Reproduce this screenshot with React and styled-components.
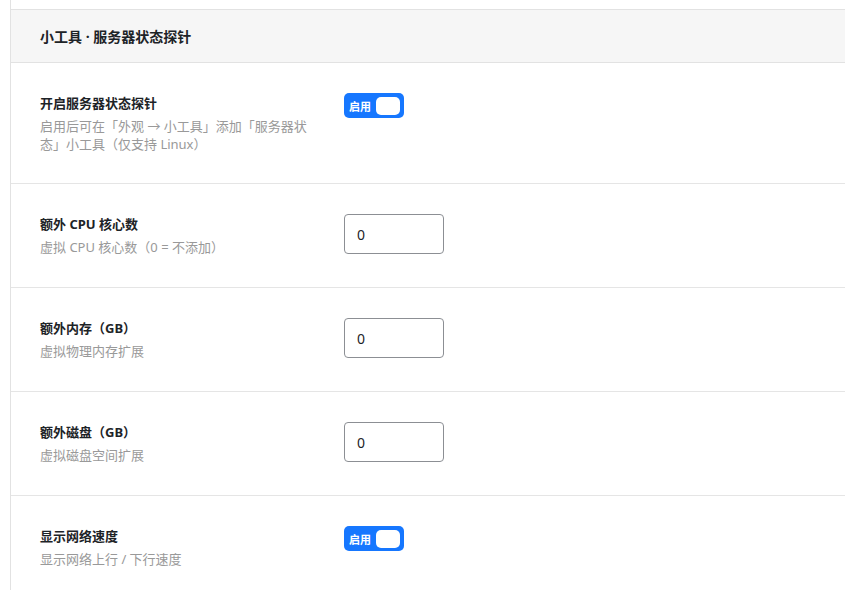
import React from 'react';
import styled, { createGlobalStyle } from 'styled-components';

const GlobalStyle = createGlobalStyle`
  body {
    margin: 0;
    background: #fff;
    font-family: "Noto Sans", "Noto Sans CJK SC", sans-serif;
    color: #1d2327;
  }
`;

const Wrap = styled.div`
  margin-left: 10px;
  padding-top: 9px;
  border-left: 1px solid #e2e2e2;
  min-height: 590px;
  box-sizing: border-box;
`;

const Section = styled.section`
  border-top: 1px solid #e2e2e2;
`;

const Header = styled.div`
  height: 52px;
  display: flex;
  align-items: center;
  padding: 0 29px;
  background: #f6f6f6;
  border-bottom: 1px solid #e2e2e2;
  font-size: 14px;
  font-weight: 700;
  color: #1d2327;
`;

const Row = styled.div`
  display: flex;
  align-items: flex-start;
  gap: 24px;
  padding: 30px 29px;
  border-bottom: 1px solid #e5e5e5;
`;

const Label = styled.div`
  width: 280px;
  flex: none;
`;

const Title = styled.div`
  font-size: 13px;
  line-height: 20px;
  font-weight: 700;
  color: #1d2327;
`;

const Desc = styled.div`
  margin-top: 4px;
  font-size: 13px;
  line-height: 18px;
  color: #999;
`;

const Toggle = styled.button`
  position: relative;
  width: 60px;
  height: 25px;
  padding: 0 0 0 5px;
  border: none;
  border-radius: 5px;
  background: ${p => (p.$on ? '#1677ff' : '#c3c4c7')};
  color: #fff;
  font-family: inherit;
  font-size: 11px;
  font-weight: 700;
  text-align: left;
  cursor: pointer;
`;

const Knob = styled.span`
  position: absolute;
  right: 4px;
  top: 3.5px;
  width: 24px;
  height: 18px;
  border-radius: 5px;
  background: #fff;
`;

const NumberInput = styled.input`
  width: 100px;
  height: 40px;
  margin-bottom: 3px;
  box-sizing: border-box;
  padding: 0 12px;
  border: 1px solid #8c8f94;
  border-radius: 4px;
  font-family: inherit;
  font-size: 14px;
  color: #1d2327;
  outline: none;
`;

const rows = [
  { title: '开启服务器状态探针', desc: '启用后可在「外观 → 小工具」添加「服务器状态」小工具（仅支持 Linux）', type: 'toggle' },
  { title: '额外 CPU 核心数', desc: '虚拟 CPU 核心数（0 = 不添加）', type: 'number' },
  { title: '额外内存（GB）', desc: '虚拟物理内存扩展', type: 'number' },
  { title: '额外磁盘（GB）', desc: '虚拟磁盘空间扩展', type: 'number' },
  { title: '显示网络速度', desc: '显示网络上行 / 下行速度', type: 'toggle' },
];

export default function App() {
  return (
    <>
      <GlobalStyle />
      <Wrap>
        <Section>
          <Header>小工具 · 服务器状态探针</Header>
          {rows.map(r => (
            <Row key={r.title}>
              <Label>
                <Title>{r.title}</Title>
                <Desc>{r.desc}</Desc>
              </Label>
              {r.type === 'toggle' ? (
                <Toggle $on>
                  启用
                  <Knob />
                </Toggle>
              ) : (
                <NumberInput type="text" defaultValue="0" />
              )}
            </Row>
          ))}
        </Section>
      </Wrap>
    </>
  );
}
